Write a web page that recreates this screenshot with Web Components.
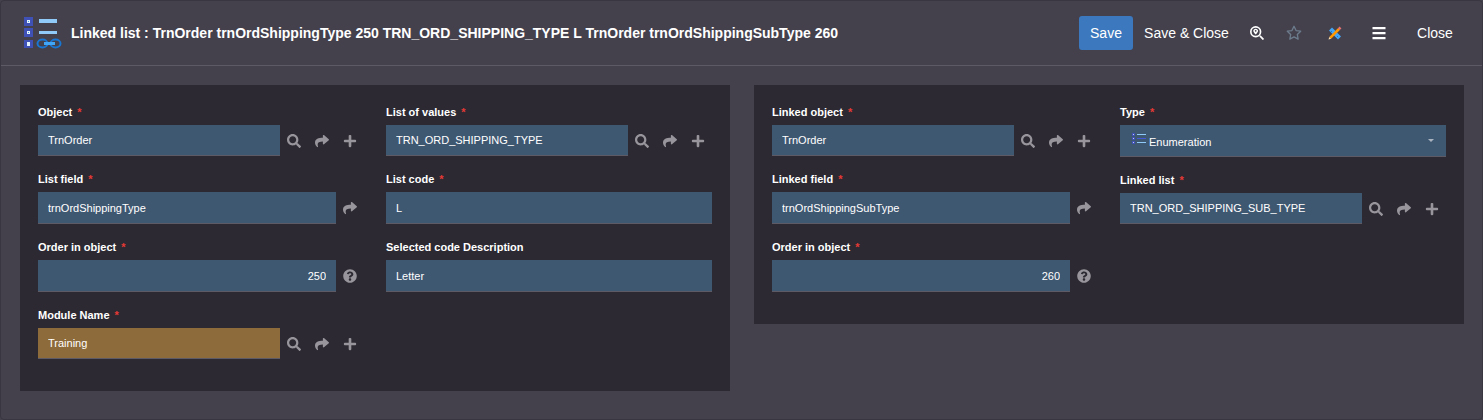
<!DOCTYPE html>
<html lang="en">
<head>
<meta charset="utf-8">
<title>Linked list</title>
<style>
  html { min-height: 100%; background: #44414d; }
  body { margin: 0; font-family: "Liberation Sans", Arial, sans-serif; font-size: 11px; color: #fff; }
</style>
</head>
<body>
<form-page>
  <page-header slot="header" heading="Linked list : TrnOrder trnOrdShippingType 250 TRN_ORD_SHIPPING_TYPE L TrnOrder trnOrdShippingSubType 260"></page-header>
  <form-panel>
    <form-field slot="left" label="Object" value="TrnOrder" actions="search,share,plus" required></form-field>
    <form-field slot="left" label="List field" value="trnOrdShippingType" actions="share" required></form-field>
    <form-field slot="left" label="Order in object" value="250" actions="help" numeric required></form-field>
    <form-field slot="left" label="Module Name" value="Training" actions="search,share,plus" tone="module" required></form-field>
    <form-field slot="right" label="List of values" value="TRN_ORD_SHIPPING_TYPE" actions="search,share,plus" required></form-field>
    <form-field slot="right" label="List code" value="L" required></form-field>
    <form-field slot="right" label="Selected code Description" value="Letter"></form-field>
  </form-panel>
  <form-panel>
    <form-field slot="left" label="Linked object" value="TrnOrder" actions="search,share,plus" required></form-field>
    <form-field slot="left" label="Linked field" value="trnOrdShippingSubType" actions="share" required></form-field>
    <form-field slot="left" label="Order in object" value="260" actions="help" numeric required></form-field>
    <select-field slot="right" label="Type" value="Enumeration" required></select-field>
    <form-field slot="right" label="Linked list" value="TRN_ORD_SHIPPING_SUB_TYPE" actions="search,share,plus" required></form-field>
  </form-panel>
</form-page>

<script>
const ICONS = {
  search: ['0 0 512 512', '<path d="M505 442.700L405.300 343c-4.500-4.500-10.600-7-17-7H372c27.600-35.300 44-79.700 44-128C416 93.100 322.900 0 208 0S0 93.100 0 208s93.100 208 208 208c48.300 0 92.700-16.400 128-44v16.300c0 6.400 2.500 12.500 7 17l99.700 99.700c9.400 9.400 24.600 9.400 33.900 0l28.300-28.300c9.400-9.400 9.400-24.600.1-34zM208 336c-70.700 0-128-57.200-128-128 0-70.700 57.200-128 128-128 70.700 0 128 57.200 128 128 0 70.700-57.200 128-128 128z"/>'],
  share: ['0 0 512 512', '<path d="M503.691 189.836L327.687 37.851C312.281 24.546 288 35.347 288 56.015v80.053C127.371 137.907 0 170.100 0 322.326c0 61.441 39.581 122.309 83.333 154.132 13.653 9.931 33.111-2.533 28.077-18.631C66.066 312.814 132.917 274.316 288 272.085V360c0 20.700 24.300 31.453 39.687 18.164l176.004-152c11.071-9.562 11.086-26.753 0-36.328z"/>'],
  plus: ['-32 0 512 512', '<path d="M416 208H272V64c0-17.670-14.330-32-32-32h-32c-17.670 0-32 14.330-32 32v144H32c-17.670 0-32 14.330-32 32v32c0 17.670 14.330 32 32 32h144v144c0 17.670 14.330 32 32 32h32c17.670 0 32-14.330 32-32V304h144c17.670 0 32-14.330 32-32v-32c0-17.670-14.330-32-32-32z"/>'],
  help: ['0 0 512 512', '<path d="M504 256c0 136.997-111.043 248-248 248S8 392.997 8 256C8 119.083 119.043 8 256 8s248 111.083 248 248zM262.655 90c-54.497 0-89.255 22.957-116.549 63.758-3.536 5.286-2.353 12.415 2.715 16.258l34.699 26.310c5.205 3.947 12.621 3.008 16.665-2.122 17.864-22.658 30.113-35.797 57.303-35.797 20.429 0 45.698 13.148 45.698 32.958 0 14.976-12.363 22.667-32.534 33.976C247.128 238.528 216 254.941 216 296v4c0 6.627 5.373 12 12 12h56c6.627 0 12-5.373 12-12v-1.333c0-28.462 83.186-29.647 83.186-106.667 0-58.002-60.165-102-116.531-102zM256 338c-25.365 0-46 20.635-46 46 0 25.364 20.635 46 46 46s46-20.636 46-46c0-25.365-20.635-46-46-46z"/>'],
  locate: ['0 0 512 512', '<circle cx="208" cy="208" r="178" fill="none" stroke="currentColor" stroke-width="60"/><path d="M340 384l44-44 118 118c9 9 9 18 0 27l-17 17c-9 9-18 9-27 0z"/><path fill-rule="evenodd" d="M208 96c-49 0-88 36-88 82 0 42 45 98 74 128 8 8 20 8 28 0 29-30 74-86 74-128 0-46-39-82-88-82zm0 48a32 32 0 1 0 0 64 32 32 0 0 0 0-64z"/>'],
  star: ['0 0 16 16', '<path fill="none" stroke="currentColor" stroke-width="1.300" stroke-linejoin="round" d="M8 1.300l2.050 4.250 4.650.65-3.400 3.250.85 4.650L8 11.850 3.850 14.100l.85-4.650L1.300 6.200l4.650-.65z"/>'],
  tools: ['0 0 16 16', '<path stroke="#42a5f5" stroke-width="4.200" d="M3.500 4l9 9"/><path stroke="#1976d2" stroke-width="1" d="M4 7l1-1M10 12l1-1"/><path stroke="#ff9800" stroke-width="2.600" d="M3.200 12.800L12 4"/><path stroke="#e57373" stroke-width="2.600" d="M11.800 4.200l1.700-1.700"/><path fill="#ffe0b2" d="M1.500 14.500l.8-2.600 1.800 1.800z"/>'],
  bars: ['0 0 16 16', '<path d="M1.500 2h13v2.300h-13zM1.500 7h13v2.300h-13zM1.500 12h13v2.300h-13z"/>'],
  enumeration: ['0 0 14 14', '<path fill="#3f51b5" d="M0 1h3v3H0zM0 5h3v3H0zM0 9h3v3H0z"/><path fill="#c5cae9" d="M1 2h1v1H1zM1 6h1v1H1zM1 10h1v1H1z"/><path fill="#90caf9" d="M5 2h9v1H5zM5 10h9v1H5z"/><path fill="#4356d5" d="M5 6h9v1H5z"/>'],
  linked: ['0 0 38 32', '<path fill="#3f51b5" d="M0 0h9v9H0zM0 11h9v9H0zM0 23h9v8H0z"/><path fill="#e3f2fd" d="M3 3h3v3H3zM3 14h3v3H3zM3 25h3v4H3z"/><path fill="#3f9be8" d="M4 4h1v1H4zM4 15h1v1H4z"/><path fill="#90caf9" d="M15 2h18v4H15zM15 14h18v3H15z"/><g fill="none" stroke="#1976d2" stroke-width="2"><ellipse cx="18.500" cy="26.500" rx="5" ry="4"/><ellipse cx="31.500" cy="26.500" rx="5" ry="4"/></g><path fill="#42a5f5" d="M20 25h11v3H20z"/>']
};
const icon = (name, w, h = w) =>
  `<svg width="${w}" height="${h}" viewBox="${ICONS[name][0]}" fill="currentColor" aria-hidden="true">${ICONS[name][1]}</svg>`;

const attach = (el, html) => { el.attachShadow({ mode: 'open' }).innerHTML = html; };

customElements.define('form-page', class extends HTMLElement {
  constructor() {
    super();
    attach(this, `<style>
      :host { display: block; box-sizing: border-box; min-height: 100vh; border: 1px solid #393641; background: #44414d; border-radius: 4px; }
      main { display: grid; grid-template-columns: 1fr 1fr; gap: 24px; align-items: start; padding: 19px 18px 27px 19px; }
    </style>
    <slot name="header"></slot>
    <main><slot></slot></main>`);
  }
});

customElements.define('page-header', class extends HTMLElement {
  constructor() {
    super();
    attach(this, `<style>
      :host { display: flex; align-items: center; height: 64px; border-bottom: 1px solid #5d5a66; padding: 0 14px 0 23px; }
      svg { display: block; }
      h1 { margin: 0 auto 0 9px; font-size: 14px; font-weight: bold; line-height: 20px; white-space: nowrap; }
      nav { display: flex; align-items: center; }
      button { display: flex; align-items: center; justify-content: center; height: 34px; padding: 0; border: 0; border-radius: 3px; background: none; color: #fff; font: inherit; font-size: 14px; white-space: nowrap; cursor: pointer; }
      .save { width: 54px; background: #3b78bd; }
      .save-close { width: 107px; }
      .locate { width: 34px; }
      .star { width: 40px; color: #6d7c8c; }
      .tools { width: 42px; }
      .menu { width: 46px; }
      .close { width: 66px; }
    </style>
    ${icon('linked', 38, 32)}
    <h1></h1>
    <nav>
      <button class="save">Save</button>
      <button class="save-close">Save &amp; Close</button>
      <button class="locate" aria-label="Locate">${icon('locate', 14)}</button>
      <button class="star" aria-label="Favorite">${icon('star', 16)}</button>
      <button class="tools" aria-label="Design">${icon('tools', 16)}</button>
      <button class="menu" aria-label="Menu">${icon('bars', 16)}</button>
      <button class="close">Close</button>
    </nav>`);
  }
  connectedCallback() {
    this.shadowRoot.querySelector('h1').textContent = this.getAttribute('heading');
  }
});

customElements.define('form-panel', class extends HTMLElement {
  constructor() {
    super();
    attach(this, `<style>
      :host { display: grid; grid-template-columns: 1fr 1fr; gap: 22px; padding: 18px 18px 32px; background: #2c2932; }
      div { display: flex; flex-direction: column; gap: 14px; min-width: 0; }
    </style>
    <div><slot name="left"></slot></div>
    <div><slot name="right"></slot></div>`);
  }
});

const FIELD_STYLE = `
  :host { display: block; }
  label { display: block; line-height: 18px; margin-bottom: 4px; font-size: 11px; font-weight: bold; }
  .mark { margin-left: 2px; color: #e53935; }
  .row { display: flex; align-items: center; position: relative; }
  input, select { flex: 1; min-width: 0; box-sizing: border-box; height: 32px; margin: 0; padding: 0 10px; border: 0; border-bottom: 1px solid #5d5a66; border-radius: 0; background: #3f5872; color: #fff; font: inherit; font-size: 11px; outline: 0; }`;
const labelHtml = el => `<label for="control">${el.getAttribute('label')}${el.hasAttribute('required') ? ' <span class="mark">*</span>' : ''}</label>`;

customElements.define('form-field', class extends HTMLElement {
  connectedCallback() {
    if (this.shadowRoot) return;
    const actions = (this.getAttribute('actions') || '').split(',').filter(Boolean);
    attach(this, `<style>${FIELD_STYLE}
      :host([numeric]) input { text-align: right; }
      :host([tone="module"]) input { background: #8e6b3a; }
      :host([actions^="search"]) input { height: 31px; }
      button { width: 28px; height: 28px; padding: 0; border: 0; background: none; color: #98969c; display: flex; align-items: center; justify-content: center; cursor: pointer; }
    </style>
    ${labelHtml(this)}
    <div class="row">
      <input id="control" type="text" value="${this.getAttribute('value')}">
      ${actions.map(a => `<button aria-label="${a}">${icon(a, 14)}</button>`).join('')}
    </div>`);
  }
});

customElements.define('select-field', class extends HTMLElement {
  connectedCallback() {
    if (this.shadowRoot) return;
    attach(this, `<style>${FIELD_STYLE}
      select { appearance: none; padding: 2px 24px 0 29px; }
      svg { position: absolute; left: 12px; top: 7px; }
      .caret { position: absolute; right: 12px; top: 14px; border: 3px solid transparent; border-top-color: #a9b4c0; border-bottom: 0; pointer-events: none; }
    </style>
    ${labelHtml(this)}
    <div class="row">
      <select id="control"><option>${this.getAttribute('value')}</option></select>
      ${icon('enumeration', 14)}
      <span class="caret"></span>
    </div>`);
  }
});
</script>
</body>
</html>
